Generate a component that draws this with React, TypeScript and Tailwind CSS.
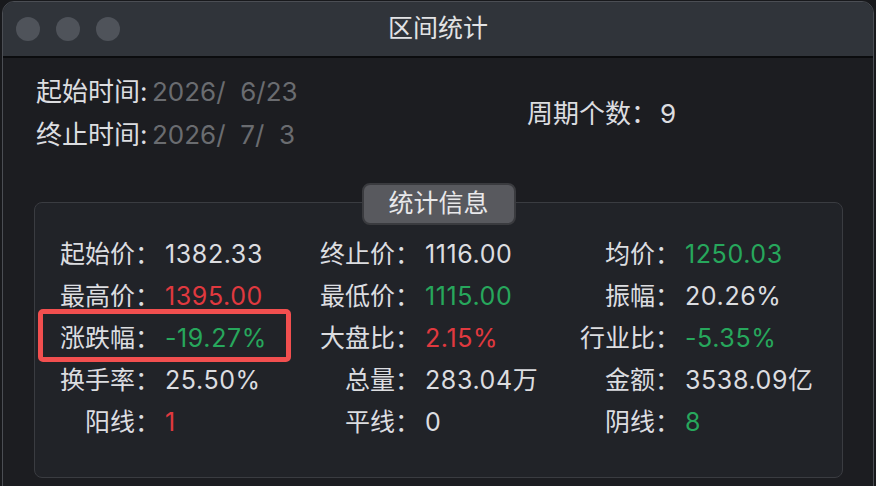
import React from "react";

type Tone = "plain" | "up" | "down";

interface Stat {
  label: string;
  value: string;
  tone?: Tone;
  marked?: boolean;
}

const rows: Stat[][] = [
  [
    { label: "起始价：", value: "1382.33" },
    { label: "终止价：", value: "1116.00" },
    { label: "均价：", value: "1250.03", tone: "down" },
  ],
  [
    { label: "最高价：", value: "1395.00", tone: "up" },
    { label: "最低价：", value: "1115.00", tone: "down" },
    { label: "振幅：", value: "20.26%" },
  ],
  [
    { label: "涨跌幅：", value: "-19.27%", tone: "down", marked: true },
    { label: "大盘比：", value: "2.15%", tone: "up" },
    { label: "行业比：", value: "-5.35%", tone: "down" },
  ],
  [
    { label: "换手率：", value: "25.50%" },
    { label: "总量：", value: "283.04万" },
    { label: "金额：", value: "3538.09亿" },
  ],
  [
    { label: "阳线：", value: "1", tone: "up" },
    { label: "平线：", value: "0" },
    { label: "阴线：", value: "8", tone: "down" },
  ],
];

const toneClass = (tone?: Tone) => {
  switch (tone) {
    case "up":
      return "text-[#e0393f]";
    case "down":
      return "text-[#27a75c]";
    default:
      return "text-[#dcdde0]";
  }
};

function StatCell({ stat }: { stat: Stat }) {
  return (
    <div className="relative flex h-[42px] items-center">
      <span className="w-[100px] text-right text-[#dcdde0]">{stat.label}</span>
      <span className={`ml-[5px] tracking-[0.6px] ${toneClass(stat.tone)}`}>{stat.value}</span>
      {stat.marked && (
        <div className="absolute -top-[9px] -bottom-[2px] -left-[22px] right-[29px] rounded-[5px] border-[5px] border-[#f24f4f]" />
      )}
    </div>
  );
}

export default function App() {
  return (
    <div
      className="h-[486px] w-[876px] overflow-hidden bg-[#18191c] px-[2px] pt-px text-[25px]"
      style={{ fontFamily: 'Inter, "Noto Sans CJK SC", sans-serif' }}
    >
      <div className="h-[520px] overflow-hidden rounded-t-[12px] border border-[#4b4e54] bg-[#1c1d21]">
        {/* Title bar */}
        <div className="grid h-[56px] grid-cols-[1fr_auto_1fr] items-center border-b-2 border-[#0b0c0e] bg-[#30343a]">
          <div className="flex gap-4 pl-[13px]">
            <span className="h-6 w-6 rounded-full bg-[#4f535a]" />
            <span className="h-6 w-6 rounded-full bg-[#4f535a]" />
            <span className="h-6 w-6 rounded-full bg-[#4f535a]" />
          </div>
          <div className="text-[#e2e3e5]">区间统计</div>
          <div />
        </div>

        {/* Range */}
        <div className="grid grid-cols-[491px_1fr] items-center pl-[33px] pt-[12px] text-[26px] leading-[43px]">
          <div>
            <div className="flex whitespace-pre">
              <span className="w-[116px] text-[#dcdde0]">起始时间:</span>
              <span className="text-[#6a6c70]">2026/  6/23</span>
            </div>
            <div className="flex whitespace-pre">
              <span className="w-[116px] text-[#dcdde0]">终止时间:</span>
              <span className="text-[#6a6c70]">2026/  7/  3</span>
            </div>
          </div>
          <div className="text-[#dcdde0]">
            周期个数：<span className="ml-[3px]">9</span>
          </div>
        </div>

        {/* Stats group */}
        <div className="relative ml-[31px] mr-[30px] mt-[46px] h-[276px] rounded-[8px] border border-[#3a3c41] bg-[#212328] pl-[25px] pt-[31px]">
          <div className="absolute -top-[20px] left-1/2 flex h-[42px] w-[154px] -translate-x-1/2 items-center justify-center rounded-[8px] border-2 border-[#3a3b3f] bg-[#58595e] text-[#e8e8ea]">
            统计信息
          </div>
          <div className="grid grid-cols-[260px_260px_260px]">
            {rows.flat().map((stat) => (
              <StatCell key={stat.label} stat={stat} />
            ))}
          </div>
        </div>
      </div>
    </div>
  );
}
